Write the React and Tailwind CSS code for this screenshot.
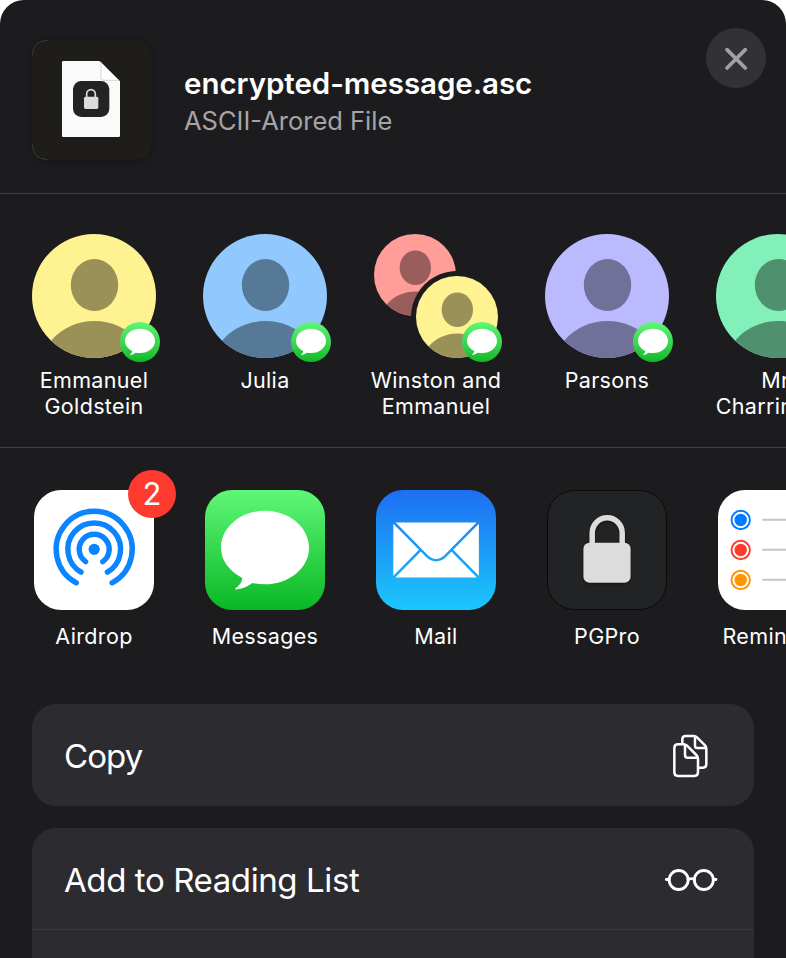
import React from "react";

const BUBBLE =
  "M60 20.8C84.3 20.8 104 37.3 104 57.7C104 78 84.3 94.300 60 94.300C55.500 94.300 51.200 93.800 47.300 92.900C42.500 96.400 37 99.100 31 99.400C30.300 99.400 30 98.700 30.600 98.200C34.500 95.400 36.800 92 37.200 88.700C37.200 88 36.900 87.700 36.500 87.400C24 80.700 16 70 16 57.700C16 37.300 35.700 20.800 60 20.800Z";

function Person({ id, fill, shade, className }) {
  return (
    <svg viewBox="0 0 124 124" className={className}>
      <clipPath id={id}>
        <circle cx="62" cy="62" r="62" />
      </clipPath>
      <circle cx="62" cy="62" r="62" fill={fill} />
      <g fill={shade} clipPath={`url(#${id})`}>
        <ellipse cx="62.5" cy="51" rx="23.7" ry="26" />
        <path d="M19.700 106C30 94 46 87 62.400 87C79 87 95 94 105 106V124H19.700Z" />
      </g>
    </svg>
  );
}

function MessageBadge() {
  return (
    <span className="absolute left-[88px] top-[88px] size-10 rounded-full bg-linear-to-b from-[#5ff777] to-[#09b825]">
      <svg viewBox="0 0 40 40" className="size-10">
        <path d={BUBBLE} fill="#fff" transform="translate(-0.46 0) scale(0.341 0.33)" />
      </svg>
    </span>
  );
}

function Contact({ lines, children, badge = true }) {
  return (
    <div className="flex w-[124px] shrink-0 flex-col items-center">
      <div className="relative size-[124px]">
        {children}
        {badge && <MessageBadge />}
      </div>
      <Label lines={lines} className="mt-[9px]" />
    </div>
  );
}

function Label({ lines, className }) {
  return (
    <div className={`flex flex-col items-center text-[21.500px] leading-[26px] tracking-[0.35px] whitespace-nowrap ${className}`}>
      {lines.map((line) => (
        <span key={line}>{line}</span>
      ))}
    </div>
  );
}

function AppItem({ name, children }) {
  return (
    <div className="flex w-[124px] shrink-0 flex-col items-center">
      <div className="relative size-[120px]">{children}</div>
      <Label lines={[name]} className="mt-[13px]" />
    </div>
  );
}

function FileThumb() {
  return (
    <div className="size-[120px] shrink-0 rounded-[15px] bg-[#1e1d1a] shadow-[0_1px_5px_rgba(0,0,0,0.35)]">
      <svg viewBox="96 120 360 360" className="size-[120px]">
        <path d="M142 121.500Q97.500 121.500 97.500 166M97.500 434Q97.500 478.500 142 478.500" fill="none" stroke="#4a4a4a" strokeWidth="2" />
        <path d="M190 183H298L360 244V407Q360 411 356 411H190Q186 411 186 407V187Q186 183 190 183Z" fill="#fafafa" />
        <path d="M300 184L358 242H312Q303 242 303 233V186Z" fill="#fff" />
        <path d="M303 187V232Q303 241 312 241H356" fill="none" stroke="#dedee0" strokeWidth="4" />
        <rect x="219" y="243" width="109" height="108" rx="25" fill="#212325" />
        <path d="M260 292V282a13 13 0 0 1 26 0V292" fill="none" stroke="#dcdcdc" strokeWidth="5" />
        <rect x="252" y="290" width="43" height="37" rx="5" fill="#dcdcdc" />
      </svg>
    </div>
  );
}

function AirdropIcon() {
  return (
    <svg viewBox="0 0 120 120" className="size-[120px]">
      <rect width="120" height="120" rx="27" fill="#fff" />
      <circle cx="60.200" cy="59.300" r="5.600" fill="#0a84ff" />
      <g fill="none" stroke="#0a84ff" strokeWidth="5.400" strokeLinecap="round" transform="translate(60.2 59.300)">
        <path d="M-8.600 12.300A15 15 0 1 1 8.600 12.300" />
        <path d="M-13.200 22.800A26.350 26.350 0 1 1 13.200 22.800" />
        <path d="M-17.900 33.500A38 38 0 1 1 17.900 33.500" />
      </g>
    </svg>
  );
}

function MessagesIcon() {
  return (
    <svg viewBox="0 0 120 120" className="size-[120px]">
      <defs>
        <linearGradient id="messages" x1="0" y1="0" x2="0" y2="1">
          <stop offset="0" stopColor="#5ff777" />
          <stop offset="1" stopColor="#09b825" />
        </linearGradient>
      </defs>
      <rect width="120" height="120" rx="27" fill="url(#messages)" />
      <path d={BUBBLE} fill="#fff" />
    </svg>
  );
}

function MailIcon() {
  return (
    <svg viewBox="0 0 120 120" className="size-[120px]">
      <defs>
        <linearGradient id="mail" gradientUnits="userSpaceOnUse" x1="0" y1="0" x2="0" y2="120">
          <stop offset="0" stopColor="#1e6ef3" />
          <stop offset="1" stopColor="#1bc8fc" />
        </linearGradient>
      </defs>
      <rect width="120" height="120" rx="27" fill="url(#mail)" />
      <rect x="17.300" y="32.400" width="85.600" height="55.200" rx="3" fill="#fff" />
      <g fill="none" stroke="url(#mail)" strokeWidth="2.500">
        <path d="M17.500 32.200L51 66.200C56.500 71.500 63.700 71.500 69.200 66.200L102.700 32.200" />
        <path d="M17.500 87.500L44.400 60.200M102.700 87.500L75.800 60.200" />
      </g>
    </svg>
  );
}

function LockIcon() {
  return (
    <svg viewBox="0 0 120 120" className="size-[120px]">
      <rect x="0.500" y="0.500" width="119" height="119" rx="27" fill="#212325" stroke="#0a0a0a" />
      <g className="drop-shadow-[0_1px_1px_rgba(0,0,0,0.5)]">
        <path d="M45.200 56V43A15 15.200 0 0 1 75.200 43V56" fill="none" stroke="#dcdcdc" strokeWidth="5.500" />
        <rect x="36.400" y="52.800" width="47.200" height="40" rx="6" fill="#dcdcdc" />
      </g>
    </svg>
  );
}

function RemindersIcon() {
  const rows = [
    ["#007aff", 30],
    ["#ff3b30", 60],
    ["#ff9500", 90],
  ];
  return (
    <svg viewBox="0 0 120 120" className="size-[120px]">
      <rect width="120" height="120" rx="27" fill="#fff" />
      {rows.map(([color, y]) => (
        <g key={color}>
          <circle cx="22.700" cy={y} r="9.200" fill="none" stroke={color} strokeWidth="1.900" />
          <circle cx="22.700" cy={y} r="6.200" fill={color} />
          <path d={`M44.300 ${y - 0.300}H120`} stroke="#c5c5ca" strokeWidth="2" />
        </g>
      ))}
    </svg>
  );
}

function CopyIcon() {
  return (
    <svg viewBox="126 102 111 132" className="mt-[2px] h-[44px] w-[37px]" fill="none" stroke="#fff" strokeWidth="7.500" strokeLinejoin="round">
      <path d="M157 132V118Q157 108 167 108H191Q197 108 201 112L225 136Q229 140 229 147V193Q229 203 219 203H206" />
      <path d="M195 108V137Q195 144 202 144H229" />
      <path d="M144 133H160Q167 133 171 137L199 165Q204 170 204 177V217Q204 228 193 228H144Q133 228 133 217V144Q133 133 144 133Z" />
      <path d="M165 134V165Q165 173 173 173H203" />
    </svg>
  );
}

function GlassesIcon() {
  return (
    <svg viewBox="102 504 165 72" className="mt-[2px] h-6 w-[55px]" fill="none" stroke="#fff" strokeWidth="8.500" strokeLinecap="round">
      <circle cx="146" cy="540" r="28.500" />
      <circle cx="221.500" cy="540" r="28.500" />
      <path d="M109 538.500H117M250 538.500H258M174 538Q184 534 194 538" />
    </svg>
  );
}

export default function App() {
  return (
    <div className="h-[958px] w-[786px] overflow-hidden bg-white font-['Inter','Liberation_Sans',sans-serif] text-white">
      <main className="flex h-full flex-col overflow-hidden rounded-t-[24px] bg-[#1c1c1e]">
        <header className="flex h-[194px] shrink-0 items-start border-b border-[#414143] pl-8 pr-5">
          <div className="mt-10">
            <FileThumb />
          </div>
          <div className="ml-8 mt-16 flex-1">
            <h1 className="text-[29.500px] leading-[38px] font-semibold tracking-[-0.05px] whitespace-nowrap">encrypted-message.asc</h1>
            <p className="mt-px text-[25.500px] leading-[36px] text-[#a5a5a7]">ASCII-Arored File</p>
          </div>
          <button className="mt-7 size-[60px] rounded-full bg-[#323236]" aria-label="Close">
            <svg viewBox="558 84 180 180" className="size-[60px]">
              <path d="M621 149L676 204M676 149L621 204" stroke="#a0a0a9" strokeWidth="11" strokeLinecap="round" />
            </svg>
          </button>
        </header>

        <section className="flex h-[254px] shrink-0 gap-[47px] border-b border-[#414143] pl-8 pt-10">
          <Contact lines={["Emmanuel", "Goldstein"]}>
            <Person id="emmanuel" fill="#fff291" shade="#999157" className="size-[124px]" />
          </Contact>
          <Contact lines={["Julia"]}>
            <Person id="julia" fill="#91c8fd" shade="#577998" className="size-[124px]" />
          </Contact>
          <Contact lines={["Winston and", "Emmanuel"]}>
            <Person id="winston" fill="#ff9d99" shade="#995e5c" className="size-[82px]" />
            <div className="absolute left-[37px] top-[37px] rounded-full bg-[#1c1c1e] p-[5px]">
              <Person id="emmanuel-small" fill="#fff291" shade="#999157" className="size-[82px]" />
            </div>
          </Contact>
          <Contact lines={["Parsons"]}>
            <Person id="parsons" fill="#bbbaff" shade="#707099" className="size-[124px]" />
          </Contact>
          <Contact lines={["Mr.", "Charrington"]} badge={false}>
            <Person id="charrington" fill="#84f0b9" shade="#4f906f" className="size-[124px]" />
          </Contact>
        </section>

        <section className="flex h-[256px] shrink-0 gap-[47px] pl-8 pt-[42px]">
          <AppItem name="Airdrop">
            <AirdropIcon />
            <span className="absolute -top-5 left-[94px] flex size-12 items-center justify-center rounded-full bg-[#ff3b30] pb-[2px] text-[31px] leading-none">
              2
            </span>
          </AppItem>
          <AppItem name="Messages">
            <MessagesIcon />
          </AppItem>
          <AppItem name="Mail">
            <MailIcon />
          </AppItem>
          <AppItem name="PGPro">
            <LockIcon />
          </AppItem>
          <AppItem name="Reminders">
            <RemindersIcon />
          </AppItem>
        </section>

        <div className="flex flex-col gap-[22px] px-8 text-[33px] leading-[40px]">
          <div className="flex h-[102px] shrink-0 items-center justify-between rounded-[24px] bg-[#2c2c30] pl-8 pr-[45px]">
            <span className="mt-[2px] tracking-[-0.9px]">Copy</span>
            <CopyIcon />
          </div>
          <div className="h-[130px] shrink-0 rounded-t-[24px] bg-[#2c2c30]">
            <div className="flex h-[102px] items-center justify-between border-b border-[#3a3a3d] pl-8 pr-[35px]">
              <span className="mt-[2px] tracking-[-0.4px]">Add to Reading List</span>
              <GlassesIcon />
            </div>
          </div>
        </div>
      </main>
    </div>
  );
}
